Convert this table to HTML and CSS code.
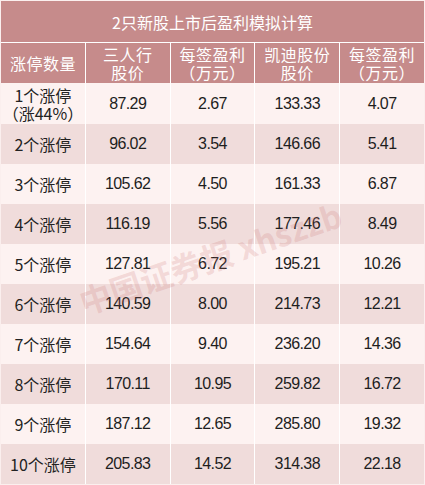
FILE: index.html
```html
<!DOCTYPE html>
<html lang="zh">
<head>
<meta charset="utf-8">
<link rel="stylesheet" href="styles.css">
</head>
<body>
<div class="sheet">
  <div class="title">2只新股上市后盈利模拟计算</div>
  <div class="grid head">
    <div class="cell">涨停数量</div>
    <div class="cell"><span class="ln">三人行</span><span class="ln">股价</span></div>
    <div class="cell"><span class="ln">每签盈利</span><span class="ln">（万元）</span></div>
    <div class="cell"><span class="ln">凯迪股份</span><span class="ln">股价</span></div>
    <div class="cell"><span class="ln">每签盈利</span><span class="ln">（万元）</span></div>
  </div>
  <div class="grid row light first">
    <div class="cell"><span class="ln">1个涨停</span><span class="ln">（涨44%）</span></div><div class="cell num">87.29</div><div class="cell num">2.67</div><div class="cell num">133.33</div><div class="cell num">4.07</div>
  </div>
  <div class="grid row pink">
    <div class="cell">2个涨停</div><div class="cell num">96.02</div><div class="cell num">3.54</div><div class="cell num">146.66</div><div class="cell num">5.41</div>
  </div>
  <div class="grid row light">
    <div class="cell">3个涨停</div><div class="cell num">105.62</div><div class="cell num">4.50</div><div class="cell num">161.33</div><div class="cell num">6.87</div>
  </div>
  <div class="grid row pink">
    <div class="cell">4个涨停</div><div class="cell num">116.19</div><div class="cell num">5.56</div><div class="cell num">177.46</div><div class="cell num">8.49</div>
  </div>
  <div class="grid row light">
    <div class="cell">5个涨停</div><div class="cell num">127.81</div><div class="cell num">6.72</div><div class="cell num">195.21</div><div class="cell num">10.26</div>
  </div>
  <div class="grid row pink">
    <div class="cell">6个涨停</div><div class="cell num">140.59</div><div class="cell num">8.00</div><div class="cell num">214.73</div><div class="cell num">12.21</div>
  </div>
  <div class="grid row light">
    <div class="cell">7个涨停</div><div class="cell num">154.64</div><div class="cell num">9.40</div><div class="cell num">236.20</div><div class="cell num">14.36</div>
  </div>
  <div class="grid row pink">
    <div class="cell">8个涨停</div><div class="cell num">170.11</div><div class="cell num">10.95</div><div class="cell num">259.82</div><div class="cell num">16.72</div>
  </div>
  <div class="grid row light">
    <div class="cell">9个涨停</div><div class="cell num">187.12</div><div class="cell num">12.65</div><div class="cell num">285.80</div><div class="cell num">19.32</div>
  </div>
  <div class="grid row pink">
    <div class="cell">10个涨停</div><div class="cell num">205.83</div><div class="cell num">14.52</div><div class="cell num">314.38</div><div class="cell num">22.18</div>
  </div>
  <div class="watermark">中国证券报 xhszzb</div>
</div>
</body>
</html>
```
FILE: styles.css
```css
html, body {
  margin: 0;
  padding: 0;
}
body {
  width: 425px;
  height: 485px;
  background: #fbefee;
  font-family: "Liberation Sans", "Noto Sans CJK SC", sans-serif;
  overflow: hidden;
}
.sheet {
  position: relative;
  padding: 1px;
  display: flex;
  flex-direction: column;
}
.title {
  height: 41px;
  background: #c68b8b;
  color: #ffffff;
  font-family: "Noto Sans CJK SC", sans-serif;
  font-size: 16px;
  display: flex;
  align-items: center;
  justify-content: center;
  border-bottom: 1px solid #ffffff;
}
.grid {
  display: grid;
  grid-template-columns: repeat(5, 1fr);
  column-gap: 1px;
  background: #ffffff;
}
.cell {
  display: flex;
  flex-direction: column;
  align-items: center;
  justify-content: center;
  text-align: center;
  font-family: "Noto Sans CJK SC", sans-serif;
  font-size: 16px;
  line-height: 18px;
  color: #222222;
}
.ln {
  display: block;
  height: 18px;
  line-height: 18px;
  white-space: nowrap;
}
.head {
  height: 40px;
}
.head .cell {
  background: #c68b8b;
  color: #ffffff;
  letter-spacing: 0.5px;
}
.row {
  height: 40px;
}
.row.first {
  height: 41px;
}
.light .cell {
  background: #fdf2f1;
}
.pink .cell {
  background: #f0dcdb;
}
.cell.num {
  font-family: "Liberation Sans", sans-serif;
  font-size: 16px;
  letter-spacing: -0.6px;
  color: #1e1e1e;
}
.watermark {
  position: absolute;
  left: 80px;
  top: 282px;
  height: 40px;
  line-height: 40px;
  font-family: "Noto Sans CJK SC", sans-serif;
  font-weight: 700;
  font-size: 32px;
  color: rgba(200, 110, 110, 0.2);
  white-space: nowrap;
  transform: rotate(-19deg);
  transform-origin: left center;
  pointer-events: none;
}
```
